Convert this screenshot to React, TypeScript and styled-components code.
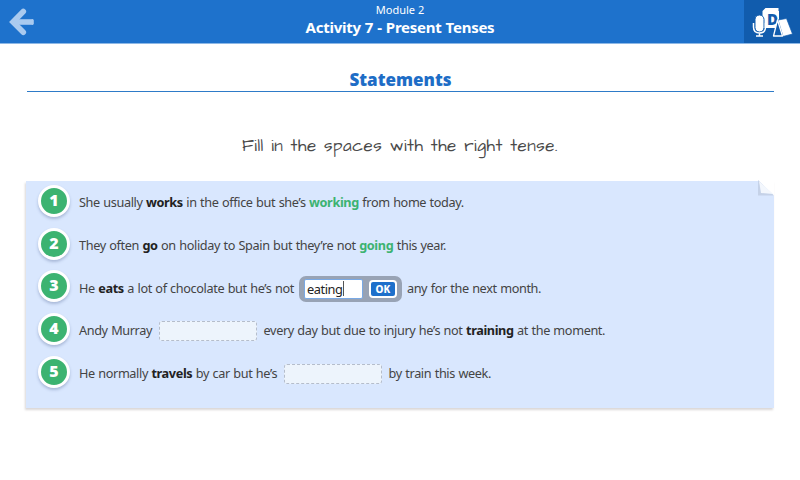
import React from "react";
import styled, { createGlobalStyle } from "styled-components";

const GlobalStyle = createGlobalStyle`
  * { box-sizing: border-box; }
  body { margin: 0; background: #fff; font-family: "Noto Sans", sans-serif; overflow: hidden; }
`;

const Page = styled.div`
  width: 800px;
  height: 480px;
  display: flex;
  flex-direction: column;
  background: #fff;
`;

const Header = styled.header`
  height: 43px;
  display: grid;
  grid-template-columns: 56px 1fr 56px;
  background: #1e72cc;
  box-shadow: 0 1px 0 #8db8e6;
  color: #fff;
`;

const HeaderButton = styled.button<{ $dark?: boolean }>`
  border: 0;
  padding: 0;
  display: flex;
  background: ${(p) => (p.$dark ? "#115cad" : "transparent")};
`;

const Titles = styled.div`
  display: flex;
  flex-direction: column;
  align-items: center;
  padding-top: 2px;
`;

const Module = styled.div`
  font-size: 11px;
  line-height: 15px;
`;

const Activity = styled.h1`
  margin: 0;
  font-size: 15px;
  line-height: 20px;
  font-weight: 700;
  letter-spacing: -0.25px;
  word-spacing: 0.4px;
`;

const Section = styled.h2`
  margin: 25px 26px 0 27px;
  height: 24px;
  border-bottom: 1px solid #2e7bc8;
  text-align: center;
  font-family: "Open Sans", sans-serif;
  font-size: 17px;
  line-height: 23px;
  font-weight: 800;
  color: #1e6dc6;
`;

const Instruction = styled.p`
  margin: 41px 0 0;
  height: 25px;
  line-height: 26px;
  text-align: center;
  font-family: "Architects Daughter", Lato, sans-serif;
  font-size: 17px;
  letter-spacing: 0.53px;
  color: #4a4a4a;
`;

const Card = styled.main`
  position: relative;
  margin: 23px 26px 0;
  height: 227px;
  background: #d9e7fe;
  box-shadow: -1px 2px 2px rgba(70, 55, 55, 0.2);
`;

const Fold = styled.svg`
  position: absolute;
  right: 0;
  top: -1px;
`;

const Rows = styled.ol`
  margin: 0;
  padding: 0 0 0 12px;
  list-style: none;
`;

const Row = styled.li`
  height: 42.7px;
  display: flex;
  align-items: center;
`;

const Badge = styled.span`
  flex: none;
  width: 32px;
  height: 32px;
  margin: -3px 9px 0 0;
  border: 3px solid #fff;
  border-radius: 50%;
  background: #3cb371;
  box-shadow: 0 2px 3px rgba(60, 80, 130, 0.3);
  color: #fff;
  font-family: "Open Sans", sans-serif;
  font-size: 16px;
  font-weight: 800;
  line-height: 25px;
  text-align: center;
`;

const Phrase = styled.span`
  white-space: pre;
  font-size: 12.7px;
  letter-spacing: -0.38px;
  word-spacing: 0.55px;
  line-height: 20px;
  color: #444;
`;

const Strong = styled.b<{ $answer?: boolean }>`
  color: ${(p) => (p.$answer ? "#3cb371" : "#222")};
`;

const Gap = styled.span`
  width: 98px;
  height: 20px;
  margin: 2px 7px 0 6.5px;
  border: 1px dashed #b5bdcb;
  border-radius: 3px;
  background: #edf4fc;
`;

const Editor = styled.span`
  width: 103px;
  height: 26px;
  margin: 2px 5px 0 5px;
  padding: 0 5px;
  display: flex;
  align-items: center;
  justify-content: space-between;
  border-radius: 7px;
  background: #98a3b5;
`;

const Field = styled.span`
  width: 59px;
  height: 20px;
  padding-left: 2px;
  display: flex;
  align-items: center;
  border: 1px solid #79a9e5;
  border-radius: 2px;
  background: #fff;
  color: #222;
  font-size: 12.8px;
  letter-spacing: -0.4px;
`;

const Caret = styled.i`
  width: 1px;
  height: 15px;
  background: #555;
`;

const OkButton = styled.button`
  width: 28px;
  height: 18px;
  padding: 0;
  border: 2px solid #fff;
  border-radius: 4px;
  background: #1e70cb;
  color: #fff;
  font: 800 10px/14px "Noto Sans", sans-serif;
`;

const BackArrow = () => (
  <svg width="56" height="43" viewBox="0 0 56 43" fill="none" stroke="#a9caef" strokeWidth="5.6">
    <path d="M14 22H33" />
    <path d="M32.6 20.4V23.6" strokeWidth="2.4" strokeLinecap="round" />
    <path d="M23.3 11.5L13 22L23.3 32.3" strokeLinecap="round" strokeLinejoin="miter" />
  </svg>
);

const ToolsIcon = () => (
  <svg width="56" height="43" viewBox="0 0 56 43">
    <path d="M18.5 11L21.5 8H34.5V11.5H22.5V25H34.5V28H20.5L18.5 26Z" fill="#fff" />
    <rect x="22" y="11" width="13" height="15" fill="#fff" />
    <text x="23" y="24.5" fontFamily="Open Sans" fontSize="15" fontWeight="800" fill="#115cad">D</text>
    <rect x="11" y="15" width="9" height="17" rx="4.5" fill="#fff" stroke="#115cad" />
    <path d="M9.5 23V27Q9.5 33 15.5 33Q21.5 33 21.5 27V23M15.5 33V36M12 36H19" fill="none" stroke="#fff" strokeWidth="1.5" />
    <path d="M34 20L42.5 18.5L48.5 34L39 36.5Z" fill="#fff" stroke="#115cad" strokeWidth=".7" />
    <path d="M33.5 20L29.5 36H38.5Z" fill="#115cad" stroke="#fff" strokeWidth="1.3" strokeLinejoin="round" />
  </svg>
);

export default function App() {
  return (
    <Page>
      <GlobalStyle />
      <Header>
        <HeaderButton aria-label="Back"><BackArrow /></HeaderButton>
        <Titles>
          <Module>Module 2</Module>
          <Activity>Activity 7 - Present Tenses</Activity>
        </Titles>
        <HeaderButton $dark aria-label="Tools"><ToolsIcon /></HeaderButton>
      </Header>
      <Section>Statements</Section>
      <Instruction>Fill in the spaces with the right tense.</Instruction>
      <Card>
        <Fold width="16" height="16" viewBox="0 0 16 16">
          <path d="M0 0H16V16Z" fill="#fff" />
          <path d="M0 0L16 15.5H0Z" fill="#c5d2e8" />
          <path d="M1 1L15 14L3 13Z" fill="#f3f7fd" />
        </Fold>
        <Rows>
          <Row>
            <Badge>1</Badge>
            <Phrase>She usually <Strong>works</Strong> in the office but she’s <Strong $answer>working</Strong> from home today.</Phrase>
          </Row>
          <Row>
            <Badge>2</Badge>
            <Phrase>They often <Strong>go</Strong> on holiday to Spain but they’re not <Strong $answer>going</Strong> this year.</Phrase>
          </Row>
          <Row>
            <Badge>3</Badge>
            <Phrase>He <Strong>eats</Strong> a lot of chocolate but he’s not</Phrase>
            <Editor>
              <Field>eating<Caret /></Field>
              <OkButton>OK</OkButton>
            </Editor>
            <Phrase>any for the next month.</Phrase>
          </Row>
          <Row>
            <Badge>4</Badge>
            <Phrase>Andy Murray</Phrase>
            <Gap />
            <Phrase>every day but due to injury he’s not <Strong>training</Strong> at the moment.</Phrase>
          </Row>
          <Row>
            <Badge>5</Badge>
            <Phrase>He normally <Strong>travels</Strong> by car but he’s</Phrase>
            <Gap />
            <Phrase>by train this week.</Phrase>
          </Row>
        </Rows>
      </Card>
    </Page>
  );
}
